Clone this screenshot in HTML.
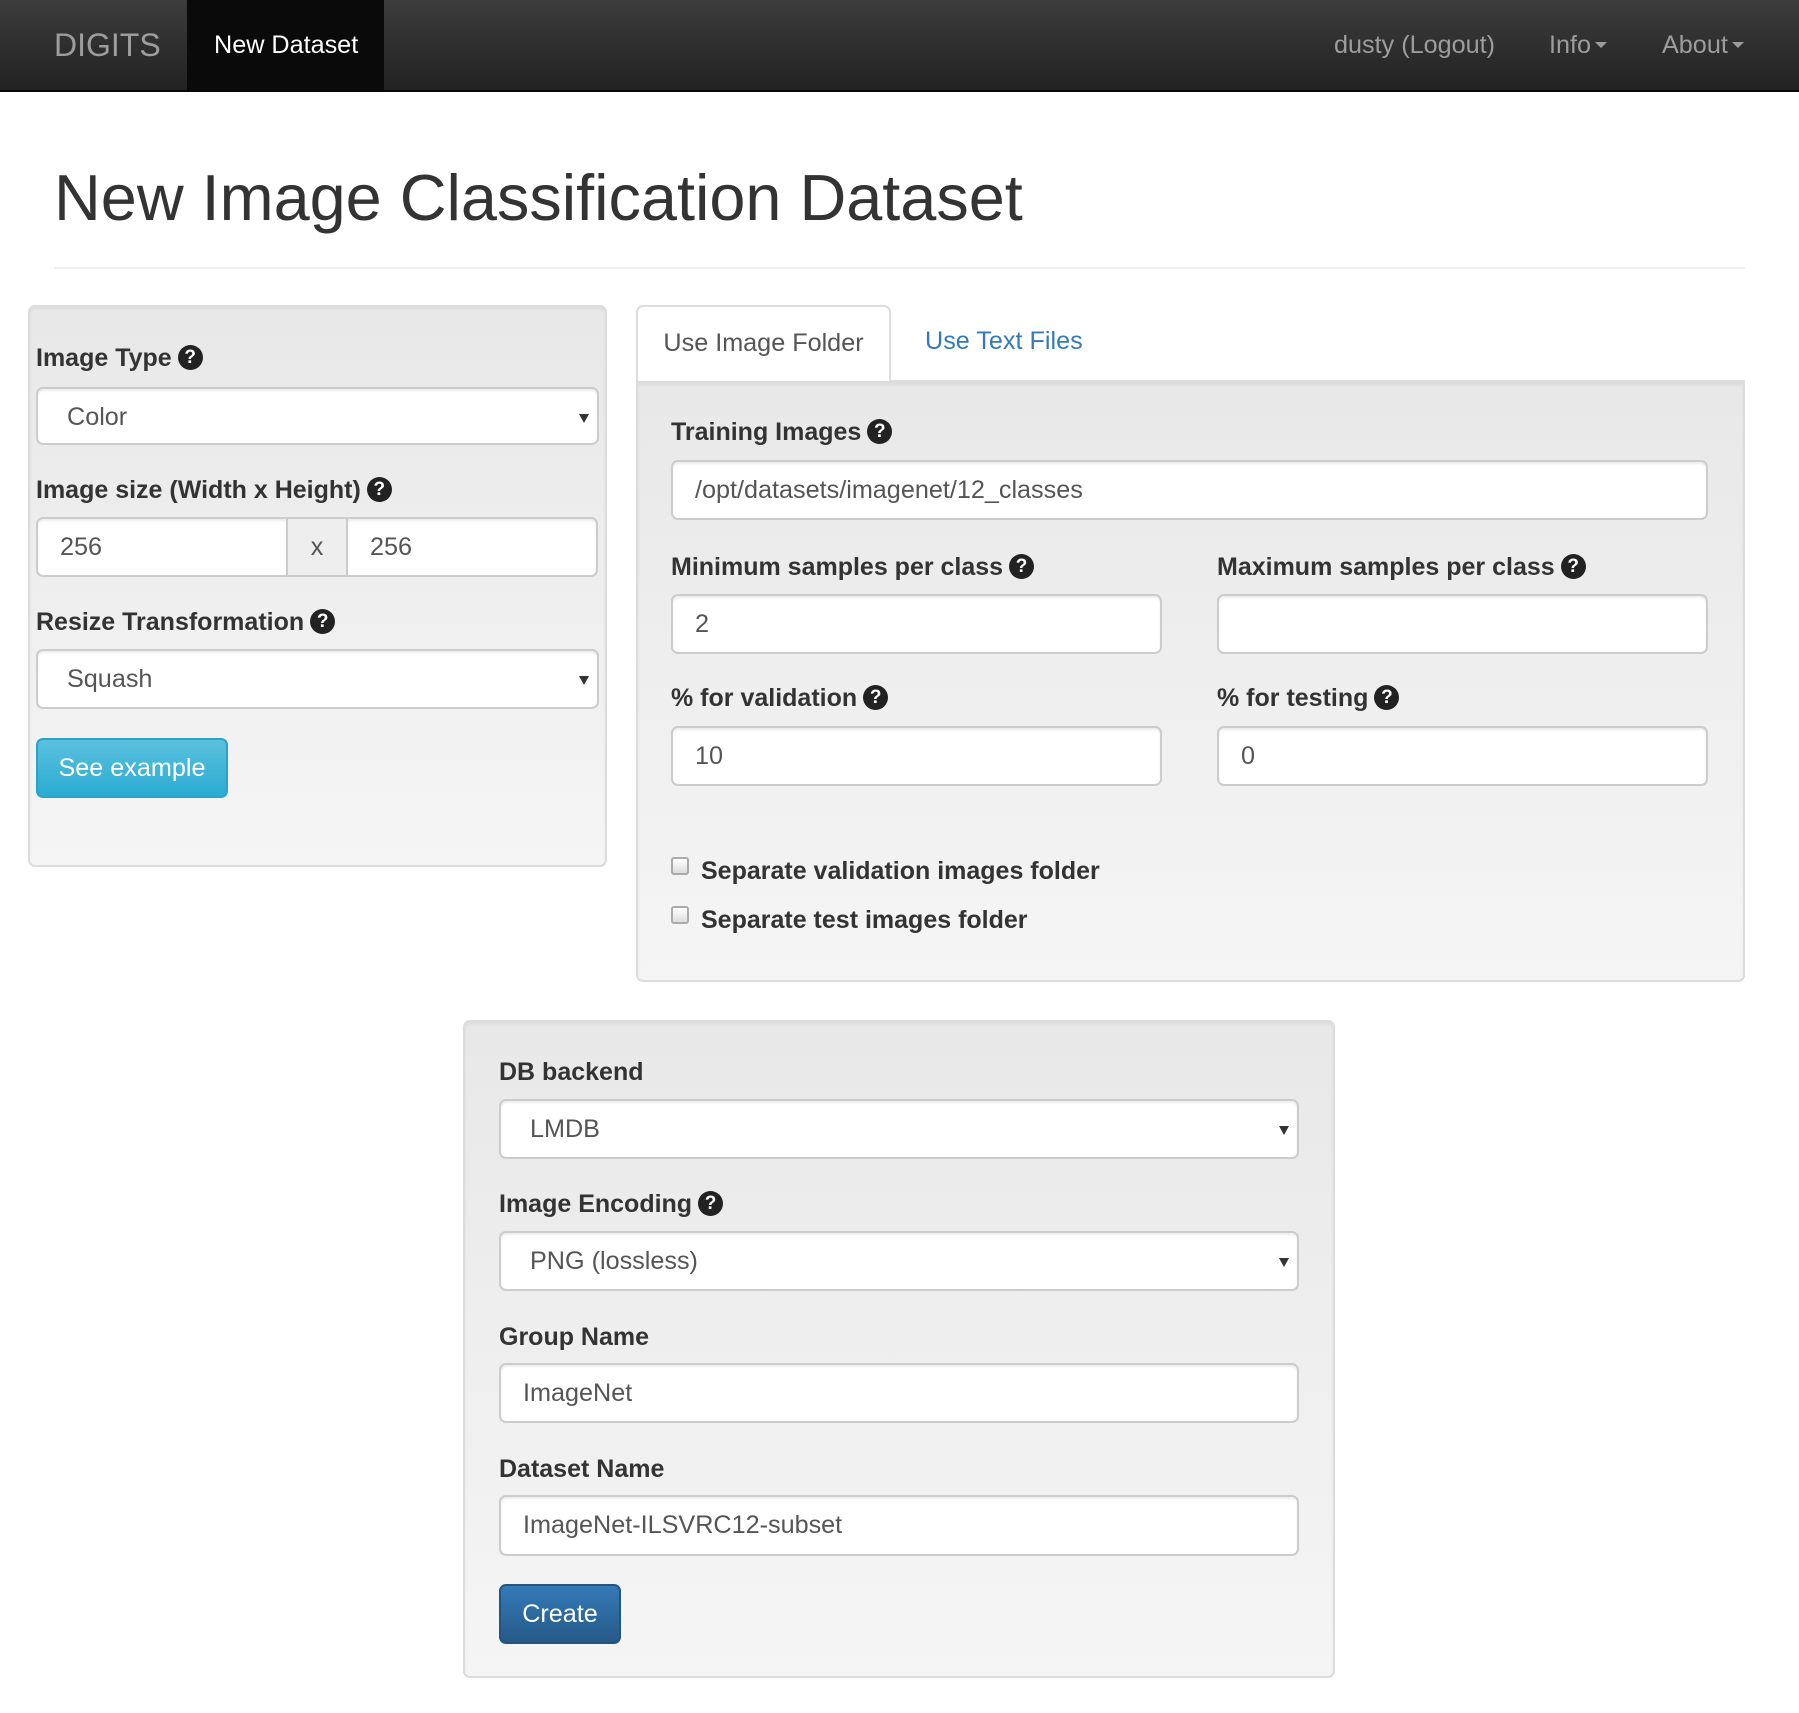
<!DOCTYPE html>
<html><head><meta charset="utf-8"><style>
*{box-sizing:border-box;margin:0;padding:0}
body{width:1799px;height:1713px;position:relative;background:#fff;font-family:"Liberation Sans",Arial,sans-serif;font-size:25.2px;color:#333;overflow:hidden}
.a{position:absolute}
.nav{left:0;top:0;width:1799px;height:92px;background:linear-gradient(#3c3c3c,#222);border-bottom:2px solid #080808}
.nl{line-height:90px;color:#9d9d9d;white-space:nowrap}
.panel{background:linear-gradient(#e8e8e8,#f5f5f5);border:2px solid #dcdcdc;border-radius:7px;box-shadow:inset 0 2px 3px rgba(0,0,0,.05)}
.lbl{font-weight:bold;line-height:36px;height:36px;white-space:nowrap;color:#333;font-size:25px}
.inp{background:#fff;border:2px solid #ccc;border-radius:7px;box-shadow:inset 0 2px 2px rgba(0,0,0,.075);color:#555;padding-left:22px;line-height:56px;white-space:nowrap}
.sel{padding-left:29px}
.sel:after{content:"";position:absolute;right:8px;top:25px;border-left:5px solid transparent;border-right:5px solid transparent;border-top:9px solid #333}
.q{display:inline-block;width:25px;height:25px;border-radius:50%;background:#222;color:#fff;font-size:19px;line-height:25px;text-align:center;font-weight:bold;vertical-align:3px;margin-left:6px}
.cb{width:18px;height:18px;border:2px solid #aaa;border-radius:3px;background:linear-gradient(#fff,#ddd)}
.caret{display:inline-block;border-left:6px solid transparent;border-right:6px solid transparent;border-top:6px solid #9d9d9d;vertical-align:5px;margin-left:4px}
</style></head><body>
<div class="a nav"></div>
<div class="a nl" style="left:54px;top:0;font-size:32px">DIGITS</div>
<div class="a" style="left:187px;top:0;width:197px;height:90px;background:#0a0a0a"></div>
<div class="a nl" style="left:214px;top:0;color:#fff">New Dataset</div>
<div class="a nl" style="left:1334px;top:0">dusty (Logout)</div>
<div class="a nl" style="left:1549px;top:0">Info<span class="caret"></span></div>
<div class="a nl" style="left:1662px;top:0">About<span class="caret"></span></div>

<div class="a" style="left:54px;top:158px;font-size:64.8px;line-height:80px;color:#333;white-space:nowrap">New Image Classification Dataset</div>
<div class="a" style="left:54px;top:267px;width:1691px;height:2px;background:#eee"></div>

<div class="a panel" style="left:28px;top:305px;width:579px;height:562px"></div>
<div class="a lbl" style="left:36px;top:340px">Image Type<span class="q">?</span></div>
<div class="a inp sel" style="left:36px;top:387px;width:563px;height:58px">Color</div>
<div class="a lbl" style="left:36px;top:472px">Image size (Width x Height)<span class="q">?</span></div>
<div class="a inp" style="left:36px;top:517px;width:252px;height:60px;border-radius:7px 0 0 7px">256</div>
<div class="a" style="left:286px;top:517px;width:62px;height:60px;background:#eee;border:2px solid #ccc;text-align:center;line-height:56px;color:#555">x</div>
<div class="a inp" style="left:346px;top:517px;width:252px;height:60px;border-radius:0 7px 7px 0">256</div>
<div class="a lbl" style="left:36px;top:604px">Resize Transformation<span class="q">?</span></div>
<div class="a inp sel" style="left:36px;top:649px;width:563px;height:60px">Squash</div>
<div class="a" style="left:36px;top:738px;width:192px;height:60px;border-radius:7px;background:linear-gradient(#5bc0de,#2aabd2);border:2px solid #28a4c9;color:#fff;line-height:56px;text-align:center">See example</div>

<div class="a" style="left:636px;top:380px;width:1109px;height:2px;background:#ddd"></div>
<div class="a" style="left:636px;top:305px;width:255px;height:78px;background:#fff;border:2px solid #ddd;border-bottom:none;border-radius:7px 7px 0 0;text-align:center;line-height:72px;color:#555">Use Image Folder</div>
<div class="a" style="left:925px;top:305px;line-height:72px;color:#337ab7;white-space:nowrap">Use Text Files</div>
<div class="a panel" style="left:636px;top:381px;width:1109px;height:601px;border-radius:0 0 7px 7px"></div>
<div class="a lbl" style="left:671px;top:414px">Training Images<span class="q">?</span></div>
<div class="a inp" style="left:671px;top:460px;width:1037px;height:60px">/opt/datasets/imagenet/12_classes</div>
<div class="a lbl" style="left:671px;top:549px">Minimum samples per class<span class="q">?</span></div>
<div class="a lbl" style="left:1217px;top:549px">Maximum samples per class<span class="q">?</span></div>
<div class="a inp" style="left:671px;top:594px;width:491px;height:60px">2</div>
<div class="a inp" style="left:1217px;top:594px;width:491px;height:60px"></div>
<div class="a lbl" style="left:671px;top:680px">% for validation<span class="q">?</span></div>
<div class="a lbl" style="left:1217px;top:680px">% for testing<span class="q">?</span></div>
<div class="a inp" style="left:671px;top:726px;width:491px;height:60px">10</div>
<div class="a inp" style="left:1217px;top:726px;width:491px;height:60px">0</div>
<div class="a cb" style="left:671px;top:857px"></div>
<div class="a lbl" style="left:701px;top:853px">Separate validation images folder</div>
<div class="a cb" style="left:671px;top:906px"></div>
<div class="a lbl" style="left:701px;top:902px">Separate test images folder</div>

<div class="a panel" style="left:463px;top:1020px;width:872px;height:658px"></div>
<div class="a lbl" style="left:499px;top:1054px">DB backend</div>
<div class="a inp sel" style="left:499px;top:1099px;width:800px;height:60px">LMDB</div>
<div class="a lbl" style="left:499px;top:1186px">Image Encoding<span class="q">?</span></div>
<div class="a inp sel" style="left:499px;top:1231px;width:800px;height:60px">PNG (lossless)</div>
<div class="a lbl" style="left:499px;top:1319px">Group Name</div>
<div class="a inp" style="left:499px;top:1363px;width:800px;height:60px">ImageNet</div>
<div class="a lbl" style="left:499px;top:1451px">Dataset Name</div>
<div class="a inp" style="left:499px;top:1495px;width:800px;height:61px">ImageNet-ILSVRC12-subset</div>
<div class="a" style="left:499px;top:1584px;width:122px;height:60px;border-radius:7px;background:linear-gradient(#337ab7,#265a88);border:2px solid #245580;color:#fff;line-height:56px;text-align:center">Create</div>
</body></html>
